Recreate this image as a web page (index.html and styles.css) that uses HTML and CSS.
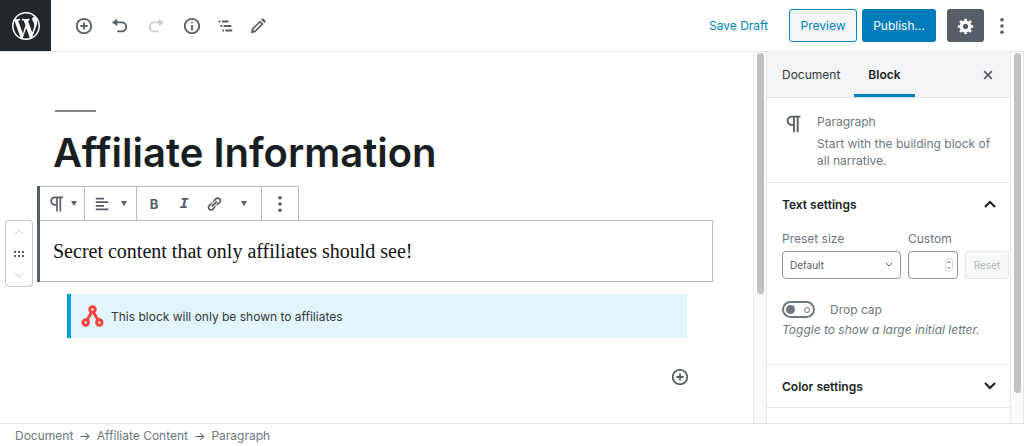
FILE: index.html
```html
<!DOCTYPE html>
<html lang="en">
<head>
  <meta charset="UTF-8">
  <meta name="viewport" content="width=device-width, initial-scale=1">
  <title>Edit Post</title>
  <link rel="stylesheet" href="styles.css">
</head>
<body>

  <header class="header">
    <a class="logo" href="#" aria-label="View posts">
      <svg width="28" height="28" viewBox="0 0 20 20"><path d="M20 10c0-5.51-4.49-10-10-10C4.48 0 0 4.49 0 10c0 5.52 4.48 10 10 10 5.51 0 10-4.48 10-10zM7.78 15.37L4.37 6.22c.55-.02 1.17-.08 1.17-.08.5-.06.44-1.13-.06-1.11 0 0-1.45.11-2.37.11-.18 0-.37 0-.58-.01C4.12 2.69 6.87 1.11 10 1.11c2.33 0 4.45.87 6.05 2.34-.68-.11-1.65.39-1.65 1.58 0 .74.45 1.36.9 2.1.35.61.55 1.36.55 2.46 0 1.49-1.4 5-1.4 5l-3.03-8.37c.54-.02.82-.17.82-.17.5-.05.44-1.25-.06-1.22 0 0-1.44.12-2.38.12-.87 0-2.33-.12-2.33-.12-.5-.03-.56 1.2-.06 1.22l.92.08 1.26 3.41zM17.41 10c.24-.64.74-1.87.43-4.25.7 1.29 1.05 2.71 1.05 4.25 0 3.29-1.73 6.24-4.4 7.78.97-2.59 1.94-5.2 2.92-7.78zM6.1 18.09C3.12 16.65 1.11 13.53 1.11 10c0-1.3.23-2.48.72-3.59C3.25 10.3 4.67 14.2 6.1 18.09zm4.03-6.63l2.58 6.98c-.86.29-1.76.45-2.71.45-.79 0-1.57-.11-2.29-.33.81-2.38 1.62-4.74 2.42-7.1z"/></svg>
    </a>
    <div class="tools">
      <button class="icon-btn" aria-label="Add block"><svg width="18" height="18" viewBox="0 0 20 20"><path d="M10 1c-5 0-9 4-9 9s4 9 9 9 9-4 9-9-4-9-9-9zm0 16c-3.9 0-7-3.1-7-7s3.1-7 7-7 7 3.1 7 7-3.1 7-7 7zm1-11H9v3H6v2h3v3h2v-3h3V9h-3V6z"/></svg></button>
      <button class="icon-btn" aria-label="Undo"><svg width="18" height="18" viewBox="0 0 20 20"><path d="M12 5H7V2L1 6l6 4V7h5c2.2 0 4 1.8 4 4s-1.8 4-4 4H7v2h5c3.3 0 6-2.7 6-6s-2.7-6-6-6z"/></svg></button>
      <button class="icon-btn" aria-label="Redo" disabled><svg width="18" height="18" viewBox="0 0 20 20"><path d="M8 5h5V2l6 4-6 4V7H8c-2.2 0-4 1.8-4 4s1.8 4 4 4h5v2H8c-3.3 0-6-2.7-6-6s2.7-6 6-6z"/></svg></button>
      <button class="icon-btn" aria-label="Content structure"><svg width="18" height="18" viewBox="0 0 20 20"><path d="M9 15h2V9H9v6zm1-10c-.5 0-1 .5-1 1s.5 1 1 1 1-.5 1-1-.5-1-1-1zm0-4c-5 0-9 4-9 9s4 9 9 9 9-4 9-9-4-9-9-9zm0 16c-3.9 0-7-3.1-7-7s3.1-7 7-7 7 3.1 7 7-3.1 7-7 7z"/></svg></button>
      <button class="icon-btn nav" aria-label="Block navigation"><svg width="18" height="18" viewBox="0 0 20 20"><path d="M3 4h2v2H3zM6.500 4H14v2H6.500zM5 9h2v2H5zM8.500 9H17v2H8.500zM7 14h2v2H7zM10.500 14H18v2H10.500z"/></svg></button>
      <button class="icon-btn pencil" aria-label="Edit"><svg width="16" height="16" viewBox="0 0 20 20"><path fill-rule="evenodd" d="M1 19l1.200-5.700L12.500 3l4.500 4.500L6.700 17.800zM4.300 16l1.700-.4 8-8-1.600-1.600-8 8zM13.700 2l1-1c.6-.6 1.600-.6 2.200 0l2.100 2.100c.6.6.6 1.600 0 2.200l-1 1z"/></svg></button>
    </div>
    <div class="actions">
      <button class="save">Save Draft</button>
      <button class="btn preview">Preview</button>
      <button class="btn publish">Publish…</button>
      <button class="btn settings" aria-label="Settings"><svg width="18" height="18" viewBox="0 0 20 20"><path d="M18 12h-2.18c-.17.7-.44 1.35-.81 1.93l1.54 1.54-2.1 2.1-1.54-1.54c-.58.36-1.23.63-1.91.79V19H8v-2.18c-.68-.16-1.33-.43-1.91-.79l-1.54 1.54-2.12-2.12 1.54-1.54c-.36-.58-.63-1.23-.79-1.91H1V9.03h2.17c.16-.7.44-1.35.8-1.94L2.43 5.55l2.1-2.1 1.54 1.54c.58-.37 1.24-.64 1.93-.81V2h3v2.18c.68.16 1.33.43 1.91.79l1.54-1.54 2.12 2.12-1.54 1.54c.36.59.64 1.24.8 1.94H18V12zm-8.5 1.5c1.66 0 3-1.34 3-3s-1.34-3-3-3-3 1.34-3 3 1.34 3 3 3z"/></svg></button>
      <button class="more" aria-label="More tools"><svg width="18" height="18" viewBox="0 0 20 20"><circle cx="10" cy="3" r="2"/><circle cx="10" cy="10" r="2"/><circle cx="10" cy="17" r="2"/></svg></button>
    </div>
  </header>

  <div class="main">
    <main class="editor">
      <div class="title-area">
        <h1>Affiliate Information</h1>
      </div>

      <div class="block-row">
        <div class="mover">
          <button aria-label="Move up"><svg width="10" height="8" viewBox="0 0 10 8"><path d="M1 6l4-4 4 4"/></svg></button>
          <svg class="drag" width="10" height="8" viewBox="0 0 10 8"><path d="M0 1h2v2H0zM4 1h2v2H4zM8 1h2v2H8zM0 5h2v2H0zM4 5h2v2H4zM8 5h2v2H8z"/></svg>
          <button aria-label="Move down"><svg width="10" height="8" viewBox="0 0 10 8"><path d="M1 2l4 4 4-4"/></svg></button>
        </div>
        <div class="block">
          <div class="toolbar">
            <div class="group type">
              <button aria-label="Change block type"><svg width="20" height="20" viewBox="0 0 24 24"><path d="M11 5v7H9.500C7.600 12 6 10.400 6 8.500S7.600 5 9.500 5H11m8-2H9.500C6.500 3 4 5.500 4 8.500S6.500 14 9.500 14H11v7h2V5h2v16h2V5h2V3z"/></svg><span class="caret"></span></button>
            </div>
            <div class="group align">
              <button aria-label="Align"><svg width="18" height="18" viewBox="0 0 20 20"><path d="M11 5V3H2v2h9zm5 4V7H2v2h14zm-5 4v-2H2v2h9zm5 4v-2H2v2h14z"/></svg><span class="caret"></span></button>
            </div>
            <div class="group format">
              <button class="bold" aria-label="Bold">B</button>
              <button class="italic" aria-label="Italic">I</button>
              <button aria-label="Link"><svg width="16" height="16" viewBox="0 0 20 20"><path d="M17.74 2.76c1.68 1.69 1.68 4.41 0 6.1l-1.53 1.52c-1.12 1.12-2.7 1.47-4.14 1.09l2.62-2.61.76-.77.76-.76c.84-.84.84-2.2 0-3.04-.84-.85-2.2-.85-3.04 0l-.77.76-3.38 3.38c-.37-1.44-.02-3.02 1.1-4.14l1.52-1.53c1.69-1.68 4.42-1.68 6.1 0zM8.59 13.43l5.34-5.34c.42-.42.42-1.1 0-1.52-.44-.43-1.13-.39-1.53 0l-5.33 5.34c-.42.42-.42 1.1 0 1.52.44.43 1.13.39 1.52 0zm-.76 2.29l4.14-4.15c.38 1.44.03 3.02-1.09 4.14l-1.52 1.53c-1.69 1.68-4.41 1.68-6.1 0-1.68-1.68-1.68-4.42 0-6.1l1.53-1.52c1.12-1.12 2.7-1.47 4.14-1.1l-4.14 4.15c-.85.84-.85 2.2 0 3.05.84.84 2.2.84 3.04 0z"/></svg></button>
              <button aria-label="More formatting"><span class="caret"></span></button>
            </div>
            <div class="group options">
              <button aria-label="More options"><svg width="18" height="18" viewBox="0 0 20 20"><circle cx="10" cy="3" r="2"/><circle cx="10" cy="10" r="2"/><circle cx="10" cy="17" r="2"/></svg></button>
            </div>
          </div>
          <p class="paragraph">Secret content that only affiliates should see!</p>
        </div>
      </div>

      <div class="notice">
        <svg width="24" height="24" viewBox="0 0 24 24"><path d="M10.500 8.500L6 16M12.500 8.500l4.500 7.500"/><circle cx="11.500" cy="5.500" r="2.700"/><circle cx="4.700" cy="18.500" r="2.700"/><circle cx="18.300" cy="18.500" r="2.700"/></svg>
        <span>This block will only be shown to affiliates</span>
      </div>

      <div class="appender">
        <button class="icon-btn" aria-label="Add block"><svg width="18" height="18" viewBox="0 0 20 20"><path d="M10 1c-5 0-9 4-9 9s4 9 9 9 9-4 9-9-4-9-9-9zm0 16c-3.9 0-7-3.1-7-7s3.1-7 7-7 7 3.1 7 7-3.1 7-7 7zm1-11H9v3H6v2h3v3h2v-3h3V9h-3V6z"/></svg></button>
      </div>
    </main>
    <div class="scrollbar"><div class="thumb editor-thumb"></div></div>

    <aside class="sidebar">
      <div class="tabs">
        <button class="tab">Document</button>
        <button class="tab active">Block</button>
        <button class="close" aria-label="Close settings"><svg width="18" height="18" viewBox="0 0 20 20"><path d="M14.95 6.46L11.41 10l3.54 3.54-1.41 1.41L10 11.42l-3.53 3.53-1.42-1.42L8.58 10 5.05 6.47l1.42-1.42L10 8.58l3.54-3.53z"/></svg></button>
      </div>

      <div class="card">
        <svg width="22" height="22" viewBox="0 0 24 24"><path d="M11 5v7H9.500C7.600 12 6 10.400 6 8.500S7.600 5 9.500 5H11m8-2H9.500C6.500 3 4 5.500 4 8.500S6.500 14 9.500 14H11v7h2V5h2v16h2V5h2V3z"/></svg>
        <div>
          <div class="card-title">Paragraph</div>
          <div class="card-text">Start with the building block of all narrative.</div>
        </div>
      </div>

      <section class="panel text-panel">
        <h2><button class="panel-toggle" aria-expanded="true">Text settings <svg width="12" height="8" viewBox="0 0 12 8"><path d="M1 7l5-5 5 5"/></svg></button></h2>
        <div class="fields">
          <div class="field preset">
            <label for="preset">Preset size</label>
            <div class="select-wrap">
              <select id="preset"><option>Default</option><option>Small</option><option>Large</option></select>
              <svg width="8" height="6" viewBox="0 0 8 6"><path d="M1 1l3 3 3-3"/></svg>
            </div>
          </div>
          <div class="field custom">
            <label for="custom">Custom</label>
            <div class="number-wrap">
              <input type="number" id="custom">
              <svg width="8" height="14" viewBox="0 0 8 14"><rect x=".5" y=".5" width="7" height="13" rx="3.500"/><path d="M2.500 5L4 3.500 5.500 5M2.500 9L4 10.500 5.500 9"/></svg>
            </div>
          </div>
          <button class="reset" disabled>Reset</button>
        </div>
        <div class="toggle-row">
          <input type="checkbox" id="dropcap" class="toggle">
          <label for="dropcap">Drop cap</label>
        </div>
        <p class="help">Toggle to show a large initial letter.</p>
      </section>

      <section class="panel">
        <h2><button class="panel-toggle" aria-expanded="false">Color settings <svg width="12" height="8" viewBox="0 0 12 8"><path d="M1 1l5 5 5-5"/></svg></button></h2>
      </section>
    </aside>
    <div class="scrollbar"><div class="thumb sidebar-thumb"></div></div>
  </div>

  <footer class="footer">
    <a href="#">Document</a>
    <span>→</span>
    <a href="#">Affiliate Content</a>
    <span>→</span>
    <a href="#">Paragraph</a>
  </footer>

</body>
</html>
```
FILE: styles.css
```css
* {
  box-sizing: border-box;
}
body {
  margin: 0;
  height: 100vh;
  display: flex;
  flex-direction: column;
  overflow: hidden;
  font-family: Inter, sans-serif;
  font-size: 12px;
  color: #555d66;
  background: #fff;
}
button {
  font: inherit;
  color: inherit;
  background: none;
  border: none;
  padding: 0;
  cursor: pointer;
}
svg {
  display: block;
  fill: #555d66;
  flex-shrink: 0;
}
h1, h2, p {
  margin: 0;
}

/* header */
.header {
  display: flex;
  align-items: center;
  height: 52px;
  flex-shrink: 0;
  border-bottom: 1px solid #e2e4e7;
}
.logo {
  display: flex;
  align-items: center;
  justify-content: center;
  width: 51px;
  height: 51px;
  background: #23282d;
}
.logo svg {
  fill: #fff;
}
.tools {
  display: flex;
  gap: 4px;
  margin-left: 17px;
}
.icon-btn {
  display: flex;
  align-items: center;
  justify-content: center;
  width: 32px;
  height: 32px;
}
.icon-btn:disabled {
  opacity: 0.3;
}
.icon-btn.nav {
  width: 26px;
}
.actions {
  display: flex;
  align-items: center;
  margin-left: auto;
  margin-right: 13px;
}
.save {
  color: #0085ba;
  margin-right: 21px;
}
.btn {
  height: 33px;
  border-radius: 3px;
}
.preview {
  width: 68px;
  color: #0085ba;
  background: #f3f5f6;
  border: 1px solid #0085ba;
}
.publish {
  width: 74px;
  margin-left: 5px;
  color: #fff;
  background: #007cba;
}
.settings {
  display: flex;
  align-items: center;
  justify-content: center;
  width: 37px;
  margin-left: 11px;
  background: #555d66;
}
.settings svg {
  fill: #fff;
}
.more {
  margin-left: 9px;
}

.main {
  display: flex;
  flex: 1;
  min-height: 0;
}

/* editor */
.editor {
  flex: 1;
  min-width: 0;
  overflow: hidden;
}
.title-area {
  padding: 58px 40px 9px 53px;
}
.title-area::before {
  content: "";
  display: block;
  width: 41px;
  height: 2px;
  margin-left: 2px;
  background: #85868a;
}
h1 {
  margin-top: 17px;
  font-size: 40px;
  line-height: 48px;
  font-weight: 600;
  color: #191e23;
}
.block-row {
  display: flex;
  align-items: flex-start;
  gap: 4px;
  padding: 0 40px 0 5px;
}
.mover {
  display: flex;
  flex-direction: column;
  align-items: center;
  justify-content: space-between;
  width: 28px;
  height: 67px;
  margin-top: 34px;
  padding: 7px 0;
  border: 1px solid #c3c9ce;
  border-radius: 4px;
}
.mover button svg {
  fill: none;
  stroke: #c5cad0;
}
.block {
  flex: 1;
  border-left: 3px solid #555d66;
}
.toolbar {
  display: flex;
  width: max-content;
  height: 34px;
  border: 1px solid #b5bcc2;
  border-width: 1px 1px 0 0;
}
.group {
  display: flex;
  align-items: center;
  border-right: 1px solid #b5bcc2;
}
.group:last-child {
  border-right: none;
}
.group button {
  display: flex;
  align-items: center;
  justify-content: center;
  height: 33px;
}
.caret {
  border: 3px solid transparent;
  border-top: 5px solid #555d66;
  border-bottom: none;
}
.type button {
  width: 44px;
  gap: 4px;
}
.align button {
  width: 51px;
  gap: 9px;
}
.format {
  padding: 0 2px;
}
.format button {
  width: 30px;
}
.options button {
  width: 36px;
}
.bold {
  font-size: 13px;
  font-weight: 700;
}
.italic {
  font-family: "Liberation Mono", monospace;
  font-size: 15px;
  font-weight: 700;
  font-style: italic;
}
.format .italic {
  padding-top: 2px;
}
.paragraph {
  padding: 15px 13px;
  border: 1px solid #b5bcc2;
  border-left: none;
  font-family: "Liberation Serif", serif;
  font-size: 20px;
  line-height: 30px;
  color: #111;
}
.notice {
  display: flex;
  align-items: center;
  gap: 6px;
  height: 44px;
  margin: 7px 66px 0 67px;
  padding-left: 10px;
  border-left: 4px solid #00a0d2;
  background: #e1f5fa;
  color: #32373c;
}
.notice svg {
  fill: none;
  stroke: #f5423e;
  stroke-width: 3;
}
.appender {
  display: flex;
  justify-content: flex-end;
  padding: 23px 57px 0 0;
}

/* scrollbars */
.scrollbar {
  width: 14px;
  flex-shrink: 0;
  padding-top: 1px;
  background: #fafafa;
  border-left: 1px solid #e8e8e8;
  border-right: 1px solid #e8e8e8;
}
.thumb {
  width: 7px;
  margin: 0 auto;
  border-radius: 4px;
  background: #c1c1c1;
}
.editor-thumb {
  height: 65%;
}
.sidebar-thumb {
  height: 92%;
}

/* sidebar */
.sidebar {
  width: 243px;
  flex-shrink: 0;
  overflow: hidden;
  color: #6c7781;
}
.tabs {
  display: flex;
  height: 46px;
  padding-left: 1px;
  background: #f3f4f5;
  border-bottom: 1px solid #e2e4e7;
}
.tab {
  padding: 3px 14px 0;
  border-bottom: 3px solid transparent;
  color: #32373c;
}
.tab.active {
  border-bottom-color: #007cba;
  font-weight: 600;
  color: #191e23;
}
.close {
  margin-left: auto;
  padding-right: 13px;
}
.card {
  display: flex;
  gap: 12px;
  padding: 15px 16px 13px;
  border-bottom: 1px solid #e2e4e7;
}
.card-title {
  line-height: 18px;
  margin-bottom: 4px;
}
.card-text {
  line-height: 17px;
}
.panel {
  padding-left: 15px;
  border-bottom: 1px solid #e2e4e7;
}
.text-panel {
  padding-bottom: 26px;
}
h2 {
  font-size: 12px;
  font-weight: 600;
  color: #191e23;
}
.panel-toggle {
  display: flex;
  align-items: center;
  justify-content: space-between;
  width: 100%;
  height: 42px;
  padding-right: 14px;
}
.panel-toggle svg {
  fill: none;
  stroke: #191e23;
  stroke-width: 2;
}
.fields {
  display: flex;
  align-items: flex-end;
  gap: 7px;
  padding: 6px 1px 0 0;
}
.field label {
  display: block;
  line-height: 16px;
  margin-bottom: 4px;
}
.preset {
  width: 119px;
}
.custom {
  width: 50px;
}
.select-wrap, .number-wrap {
  position: relative;
}
.select-wrap svg, .number-wrap svg {
  position: absolute;
  right: 8px;
  top: 11px;
  fill: none;
  stroke: #555d66;
  pointer-events: none;
}
.number-wrap svg {
  right: 5px;
  top: 7px;
}
.number-wrap rect {
  stroke: #d5d8db;
}
select, input[type="number"] {
  display: block;
  width: 100%;
  height: 28px;
  padding: 0 7px;
  border: 1px solid #8d96a0;
  border-radius: 4px;
  background: #fff;
  font-family: inherit;
  font-size: 10px;
  color: #555d66;
  appearance: none;
}
input[type="number"] {
  appearance: textfield;
}
.reset {
  flex: 1;
  height: 28px;
  border: 1px solid #e2e4e7;
  border-radius: 3px;
  background: #f7f8f8;
  font-size: 10px;
  color: #b0b6bb;
}
.toggle-row {
  display: flex;
  align-items: center;
  gap: 15px;
  margin-top: 22px;
}
.toggle {
  display: flex;
  align-items: center;
  justify-content: space-between;
  width: 33px;
  height: 17px;
  margin: 0;
  padding: 0 3px 0 2px;
  border: 2px solid #6c7781;
  border-radius: 9px;
  appearance: none;
}
.toggle::before {
  content: "";
  width: 9px;
  height: 9px;
  border-radius: 50%;
  background: #6c7781;
}
.toggle::after {
  content: "";
  box-sizing: border-box;
  width: 6px;
  height: 6px;
  border: 1px solid #6c7781;
  border-radius: 50%;
}
.help {
  margin-top: 4px;
  line-height: 16px;
  font-style: italic;
}

/* breadcrumb */
.footer {
  display: flex;
  align-items: center;
  gap: 6px;
  height: 23px;
  flex-shrink: 0;
  padding-left: 15px;
  border-top: 1px solid #e2e4e7;
}
.footer a {
  color: #6c7781;
  text-decoration: none;
}
```
